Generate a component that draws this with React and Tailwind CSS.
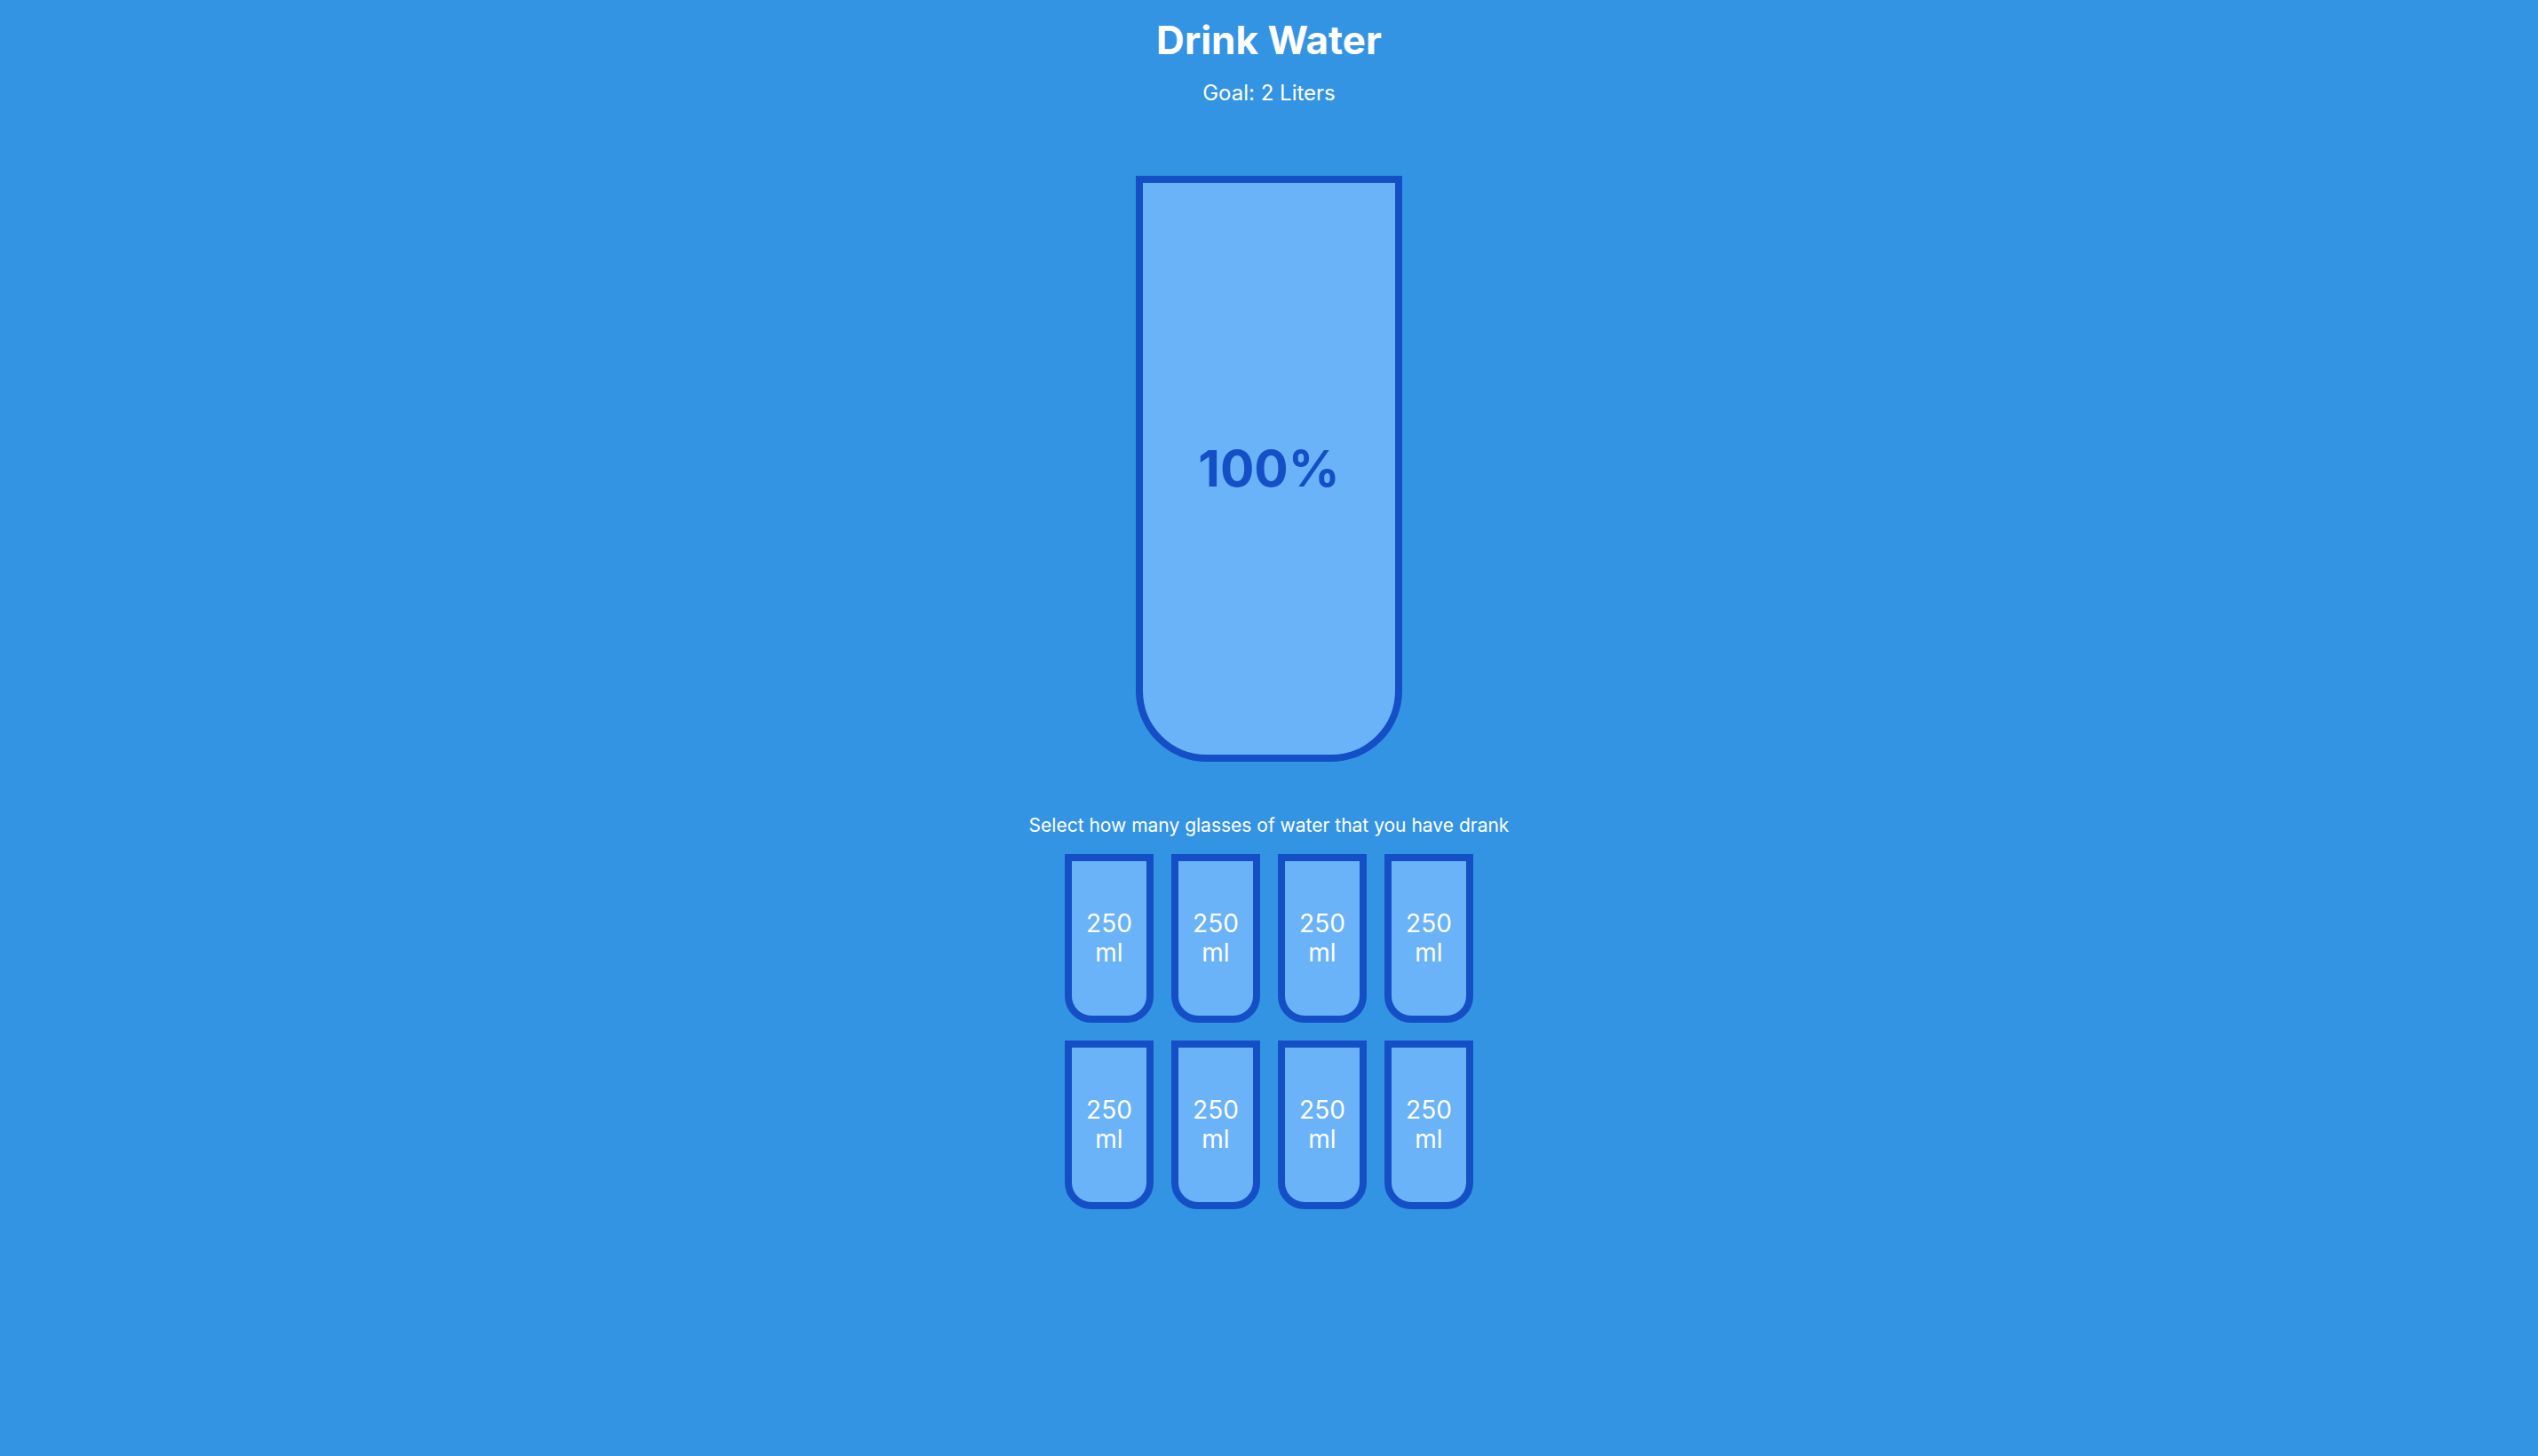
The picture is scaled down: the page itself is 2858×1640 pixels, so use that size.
import React from "react";

function SmallCup() {
  return (
    <div className="w-[100px] h-[190px] border-[8px] border-[#144fc6] rounded-b-[30px] bg-[#6ab3f8] flex flex-col items-center justify-center text-center text-white text-[28px] leading-[33px]">
      <span>250</span>
      <span>ml</span>
    </div>
  );
}

export default function App() {
  return (
    <div className="min-h-screen w-full bg-[#3494e4] flex flex-col items-center text-white font-['Inter',sans-serif]">
      <h1 className="mt-[18px] text-[44px] leading-[54px] font-bold">Drink Water</h1>
      <h3 className="mt-[18px] text-[24px] leading-[29px] font-normal">Goal: 2 Liters</h3>
      <div className="mt-[79px] w-[300px] h-[660px] border-[8px] border-[#144fc6] rounded-b-[80px] bg-[#6ab3f8] flex items-center justify-center overflow-hidden">
        <span className="text-[57px] font-bold text-[#144fc6]">100%</span>
      </div>
      <p className="mt-[59px] text-[21px] leading-[26px]">Select how many glasses of water that you have drank</p>
      <div className="mt-[19px] grid grid-cols-4 gap-5">
        {Array.from({ length: 8 }).map((_, i) => (
          <SmallCup key={i} />
        ))}
      </div>
    </div>
  );
}
